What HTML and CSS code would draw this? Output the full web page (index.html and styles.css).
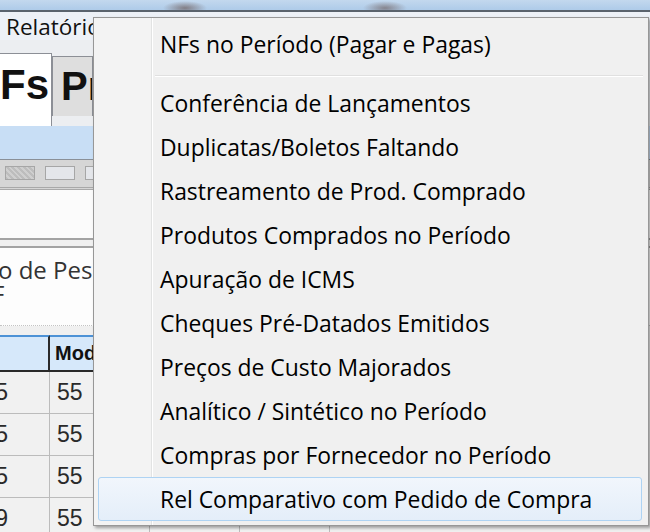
FILE: index.html
```html
<!DOCTYPE html>
<html lang="pt-BR">
<head>
    <meta charset="UTF-8">
    <title>Relatórios</title>
    <link rel="stylesheet" href="styles.css">
</head>
<body>
    <div class="app">
        <div class="titlebar"></div>
        <div class="menubar"><span class="menubar-item">Relatórios</span></div>

        <!-- abas da tela de notas -->
        <div class="tabs">
            <div class="tab tab-active"><span>NFs</span></div>
            <div class="tab"><span>Produtos</span></div>
        </div>
        <div class="tab-band"></div>
        <div class="toolbar">
            <span class="tb-box tb-dark"></span>
            <span class="tb-box"></span>
            <span class="tb-box"></span>
        </div>
        <div class="filter-box"></div>
        <div class="search">
            <div class="search-label">o de Pesquisa</div>
            <div class="search-line">F</div>
        </div>

        <!-- grade de notas -->
        <div class="grid">
            <div class="grid-row grid-head">
                <div class="cell col-num"></div><div class="cell col-mod">Modelo</div><div class="cell">Série</div><div class="cell">Número</div>
            </div>
            <div class="grid-row">
                <div class="cell col-num">2345</div><div class="cell col-mod">55</div><div class="cell">1</div><div class="cell">000123</div>
            </div>
            <div class="grid-row">
                <div class="cell col-num">2345</div><div class="cell col-mod">55</div><div class="cell">1</div><div class="cell">000124</div>
            </div>
            <div class="grid-row">
                <div class="cell col-num">2345</div><div class="cell col-mod">55</div><div class="cell">1</div><div class="cell">000125</div>
            </div>
            <div class="grid-row">
                <div class="cell col-num">2349</div><div class="cell col-mod">55</div><div class="cell">1</div><div class="cell">NFe/4</div>
            </div>
        </div>
    </div>

    <!-- menu suspenso de relatórios -->
    <div class="popup">
        <div class="menu-item">NFs no Período (Pagar e Pagas)</div>
        <div class="menu-sep"></div>
        <div class="menu-item">Conferência de Lançamentos</div>
        <div class="menu-item">Duplicatas/Boletos Faltando</div>
        <div class="menu-item">Rastreamento de Prod. Comprado</div>
        <div class="menu-item">Produtos Comprados no Período</div>
        <div class="menu-item">Apuração de ICMS</div>
        <div class="menu-item">Cheques Pré-Datados Emitidos</div>
        <div class="menu-item">Preços de Custo Majorados</div>
        <div class="menu-item">Analítico / Sintético no Período</div>
        <div class="menu-item">Compras por Fornecedor no Período</div>
        <div class="menu-item menu-item-hover">Rel Comparativo com Pedido de Compra</div>
    </div>
</body>
</html>
```

FILE: styles.css
```css
* { margin: 0; padding: 0; box-sizing: border-box; }
body { width: 650px; height: 532px; overflow: hidden; background: #f0f0f0; font-family: "Open Sans", Arial, sans-serif; color: #111; }
.app { width: 650px; height: 532px; overflow: hidden; }

.titlebar { height: 12px; border-bottom: 2px solid #5a636d;
    background: radial-gradient(ellipse 22px 7px at 185px 8px, rgba(90,60,50,0.55), transparent),
                radial-gradient(ellipse 22px 7px at 385px 8px, rgba(90,60,50,0.5), transparent),
                linear-gradient(#c3d8ee, #aecbe9); }
.menubar { height: 28px; background: #edf1f7; padding-left: 6px; font-size: 22.5px; line-height: 30px; white-space: nowrap; }

.tabs { height: 86px; display: flex; align-items: flex-end; background: #eceef1; }
.tab { height: 60px; width: 41px; margin-bottom: 10px; display: flex; align-items: center; overflow: hidden;
    background: #dedede; border: 1px solid #8c8f96; border-bottom: none;
    font-family: "Liberation Sans", Arial, sans-serif; font-weight: bold; font-size: 40px; color: #111; padding-left: 8px; white-space: nowrap; }
.tab-active { width: 52px; height: 73px; margin-bottom: 0; background: #fff; border-left: none; justify-content: flex-end; padding: 0 2px 10px 0; font-size: 42px; }

.tab-band { height: 34px; background: #c8def5; border-bottom: 1px solid #8a9098; }
.toolbar { height: 30px; display: flex; align-items: flex-start; gap: 10px; padding: 6px 0 0 5px; background: #d6d6d6; border-bottom: 3px double #a9a9a9; }
.tb-box { width: 30px; height: 14px; background: #e4e6ea; border: 1px solid #a6a6a6; }
.tb-dark { background: repeating-linear-gradient(45deg, #bdbdbd 0 2px, #cfcfcf 2px 4px); }
.filter-box { height: 58px; background: #fbfbfb; border-bottom: 2px solid #a3a3a3; box-shadow: inset 0 -6px 0 #f0f0f0, inset 0 -8px 0 #a3a3a3; }

.search { height: 78px; background: #fdfdfd; border-bottom: 1px dotted #c4c4c4; padding-top: 10px; font-size: 24px; color: #333; white-space: nowrap; }
.search-label { height: 24px; line-height: 24px; margin-left: -2px; }
.search-line { height: 24px; line-height: 24px; margin-left: -8px; }

.grid { margin-top: 9px; font-family: "Liberation Sans", Arial, sans-serif; white-space: nowrap; }
.grid-row { display: flex; height: 42px; }
.cell { width: 90px; flex: none; overflow: hidden; background: #f1f1f1; border-right: 1px solid #bcbcbc; border-bottom: 1px solid #bcbcbc;
    display: flex; align-items: center; padding-left: 7px; font-size: 23px; color: #2a2a2a; }
.grid-head { height: 37px; }
.grid-head .cell { background: #d6e8fa; border-top: 2px solid #4d92d6; border-right: 2px solid #2a2a2a; border-bottom: 2px solid #2a2a2a;
    font-size: 20px; font-weight: bold; color: #111; padding-left: 5px; }
.grid .col-num { width: 50px; justify-content: flex-end; padding: 0 41px 0 0; }
.grid-head .col-num { padding: 0; }
.grid .col-mod { width: 100px; }

.popup { position: absolute; left: 93px; top: 17px; width: 556px; height: 509px; padding: 4px 0 4px 0;
    border: 1px solid #979797; box-shadow: 2px 2px 3px rgba(0,0,0,0.35);
    background: linear-gradient(to right, #f3f3f3 57px, #e2e3e3 57px 58px, #fff 58px 59px, #f0f0f0 59px); }
.menu-item { height: 44px; line-height: 43px; margin: 0 6px 0 4px; padding-left: 61px; border: 1px solid transparent; border-radius: 3px; font-size: 22.9px; color: #000; white-space: nowrap; }
.menu-item-hover { border-color: #aed3f3; background: linear-gradient(#f1f6fc, #e4eef9); }
.menu-sep { height: 2px; margin: 9px 5px 4px 61px; border-top: 1px solid #e0e0e0; border-bottom: 1px solid #fff; }
```
